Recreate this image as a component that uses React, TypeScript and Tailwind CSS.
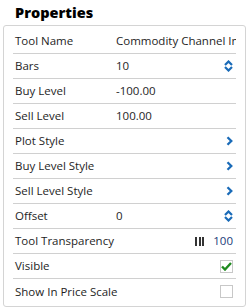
import React from "react";

type Row = {
  label: string;
  value?: string;
  kind?: "spin" | "link" | "transparency" | "checked" | "unchecked";
};

const rows: Row[] = [
  { label: "Tool Name", value: "Commodity Channel Index" },
  { label: "Bars", value: "10", kind: "spin" },
  { label: "Buy Level", value: "-100.00" },
  { label: "Sell Level", value: "100.00" },
  { label: "Plot Style", kind: "link" },
  { label: "Buy Level Style", kind: "link" },
  { label: "Sell Level Style", kind: "link" },
  { label: "Offset", value: "0", kind: "spin" },
  { label: "Tool Transparency", kind: "transparency" },
  { label: "Visible", kind: "checked" },
  { label: "Show In Price Scale", kind: "unchecked" },
];

function SpinIcon() {
  return (
    <svg width="9" height="12" viewBox="0 0 9 12" className="text-[#1a6bb8]">
      <path d="M1 5 L4.5 1.5 L8 5" fill="none" stroke="currentColor" strokeWidth="2.2" />
      <path d="M1 7 L4.5 10.5 L8 7" fill="none" stroke="currentColor" strokeWidth="2.2" />
    </svg>
  );
}

function ChevronIcon() {
  return (
    <svg width="7" height="10" viewBox="0 0 7 10" className="text-[#1a6bb8]">
      <path d="M1.5 1.2 L5.3 5 L1.5 8.8" fill="none" stroke="currentColor" strokeWidth="2.3" />
    </svg>
  );
}

function Trailing({ kind }: { kind?: Row["kind"] }) {
  if (kind === "spin") return <SpinIcon />;
  if (kind === "link") return <ChevronIcon />;
  if (kind === "transparency")
    return (
      <div className="flex items-center gap-[9px]">
        <div className="flex gap-[1.5px]">
          <span className="w-[2px] h-[9px] bg-[#333]" />
          <span className="w-[2px] h-[9px] bg-[#333]" />
          <span className="w-[2px] h-[9px] bg-[#333]" />
        </div>
        <span className="text-[#203a78]">100</span>
      </div>
    );
  if (kind === "checked" || kind === "unchecked")
    return (
      <div className="w-[13px] h-[13px] border border-[#c8c8c8] bg-white flex items-center justify-center">
        {kind === "checked" && (
          <svg width="11" height="9" viewBox="0 0 11 9">
            <path d="M1 4.5 L4 7.5 L10 1" fill="none" stroke="#1f8a1f" strokeWidth="2.4" />
          </svg>
        )}
      </div>
    );
  return null;
}

export default function App() {
  return (
    <div className="w-[249px] h-[308px] bg-white font-['Open_Sans',sans-serif] text-[#1e1e1e]">
      <h2 className="pl-[15px] pt-[2px] text-[14.5px] leading-[21px] font-extrabold text-black">Properties</h2>
      <div className="mx-[3px] mt-[2px] border border-[#d4d4d4] rounded-[3px] px-[9px] pt-[3px] pb-[2px]">
        {rows.map((row, i) => (
          <div
            key={row.label}
            className={`flex items-center h-[25px] text-[11.5px] overflow-hidden ${i < rows.length - 1 ? "border-b border-[#d0d0d0]" : ""}`}
          >
            <span className="w-[103px] pl-[2px] shrink-0 whitespace-nowrap">{row.label}</span>
            <span className="flex-1 min-w-0 whitespace-nowrap">{row.value}</span>
            {row.kind && (
              <span className="shrink-0 flex items-center pr-[3px]">
                <Trailing kind={row.kind} />
              </span>
            )}
          </div>
        ))}
      </div>
    </div>
  );
}
